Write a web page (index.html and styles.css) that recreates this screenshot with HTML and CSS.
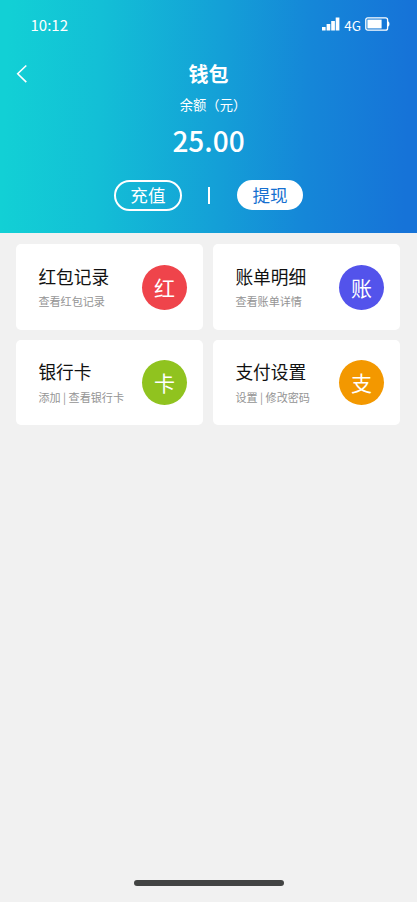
FILE: index.html
```html
<!DOCTYPE html>
<html lang="zh-CN">
<head>
<meta charset="utf-8">
<meta name="viewport" content="width=device-width, initial-scale=1">
<title>钱包</title>
<link rel="stylesheet" href="styles.css">
</head>
<body>
<div class="screen">
  <header class="hero">
    <div class="status">
      <span class="time">10:12</span>
      <div class="signals">
        <svg class="bars" width="18" height="14" viewBox="0 0 18 14" fill="#fff"><path d="M0 10h3.600v3.500H0zM4.600 7h3.700v6.500H4.600zM9.200 4h3.700v9.500H9.200zM13.700.5h3.700v13h-3.700z"/></svg>
        <span class="network">4G</span>
        <svg class="battery" width="25" height="14" viewBox="0 0 25 14"><rect x=".8" y=".8" width="21.800" height="12.400" rx="2" fill="none" stroke="#fff" stroke-width="1.300"/><rect x="2.400" y="2.600" width="14.200" height="8.800" fill="#fff"/><path d="M23 4.300q1.500.5 1.500 2.700T23 9.700z" fill="#fff"/></svg>
      </div>
    </div>
    <div class="titlebar">
      <svg class="back" width="12" height="20" viewBox="0 0 12 20" fill="none" stroke="#fff" stroke-width="1.600"><path d="M10.300 1.500 1.700 9.700l8.600 8.400"/></svg>
      <h1 class="title">钱包</h1>
    </div>
    <p class="label">余额（元）</p>
    <p class="amount">25.00</p>
    <div class="actions">
      <button class="pill">充值</button>
      <span class="divider"></span>
      <button class="pill pill-solid">提现</button>
    </div>
  </header>
  <main class="grid">
    <section class="card">
      <div class="text"><h2 class="name">红包记录</h2><p class="desc">查看红包记录</p></div>
      <span class="badge red">红</span>
    </section>
    <section class="card">
      <div class="text"><h2 class="name">账单明细</h2><p class="desc">查看账单详情</p></div>
      <span class="badge blue">账</span>
    </section>
    <section class="card">
      <div class="text"><h2 class="name">银行卡</h2><p class="desc">添加 | 查看银行卡</p></div>
      <span class="badge green">卡</span>
    </section>
    <section class="card">
      <div class="text"><h2 class="name">支付设置</h2><p class="desc">设置 | 修改密码</p></div>
      <span class="badge orange">支</span>
    </section>
  </main>
  <div class="home"></div>
</div>
</body>
</html>
```

FILE: styles.css
```css
* { box-sizing: border-box; margin: 0; padding: 0; }
body { background: #f1f1f1; font-family: "Noto Sans CJK SC", sans-serif; }
.screen { width: 417px; height: 902px; display: flex; flex-direction: column; overflow: hidden; }
.hero { height: 233.3px; flex: none; color: #fff; background: linear-gradient(92deg, #12d0d5 2%, #13bfd6 24%, #149fd7 53%, #1587d8 73%, #1673d8 97%); }
.status { height: 50px; padding: 0 27px 0 30.500px; display: flex; align-items: center; justify-content: space-between; }
.time { font-size: 15px; line-height: 20px; }
.signals { display: flex; align-items: center; height: 20px; margin-bottom: 3px; }
.network { font-size: 13.5px; line-height: 20px; margin: 2px 4px 0 4px; }
.titlebar { height: 46px; padding: 0 16px; display: grid; grid-template-columns: 12px 1fr 12px; align-items: center; }
.back { margin-top: 2px; }
.title { font-size: 20px; line-height: 28px; margin-top: 2px; font-weight: 700; text-align: center; }
.label { font-size: 13.3px; line-height: 18px; padding-left: 9px; text-align: center; }
.amount { font-size: 28px; line-height: 40px; margin-top: 6px; font-weight: 500; text-align: center; }
.actions { display: flex; align-items: center; justify-content: center; margin-top: 19px; gap: 27.300px; height: 32px; }
.pill { width: 68px; height: 31px; border: 2px solid #fff; border-radius: 16px; background: none; color: #fff; font: 17.6px/26px "Noto Sans CJK SC", sans-serif; }
.pill-solid { width: 66px; height: 29.500px; background: #fff; color: #1570d0; }
.divider { width: 1.500px; height: 17px; margin-left: -1px; background: #fff; }
.grid { display: grid; grid-template-columns: 187px 187px; grid-template-rows: 85.600px 85.600px; gap: 10px; padding: 11px 16.400px 0; }
.card { background: #fff; border-radius: 5px; padding: 0 16.500px 0 22px; display: flex; align-items: center; justify-content: space-between; }
.text { margin-bottom: 2px; }
.name { font-size: 17.7px; line-height: 26px; font-weight: 400; color: #111; }
.desc { font-size: 11.100px; line-height: 16px; margin-top: 4.500px; color: #949494; white-space: nowrap; }
.badge { width: 45px; height: 45px; border-radius: 50%; color: #fff; font-size: 21px; line-height: 45px; font-weight: 400; text-align: center; }
.red { background: #ef444b; }
.blue { background: #5353eb; }
.green { background: #90c31f; }
.orange { background: #f39800; }
.home { width: 150px; height: 6px; border-radius: 3px; background: #424443; margin: auto auto 16px; }
```
